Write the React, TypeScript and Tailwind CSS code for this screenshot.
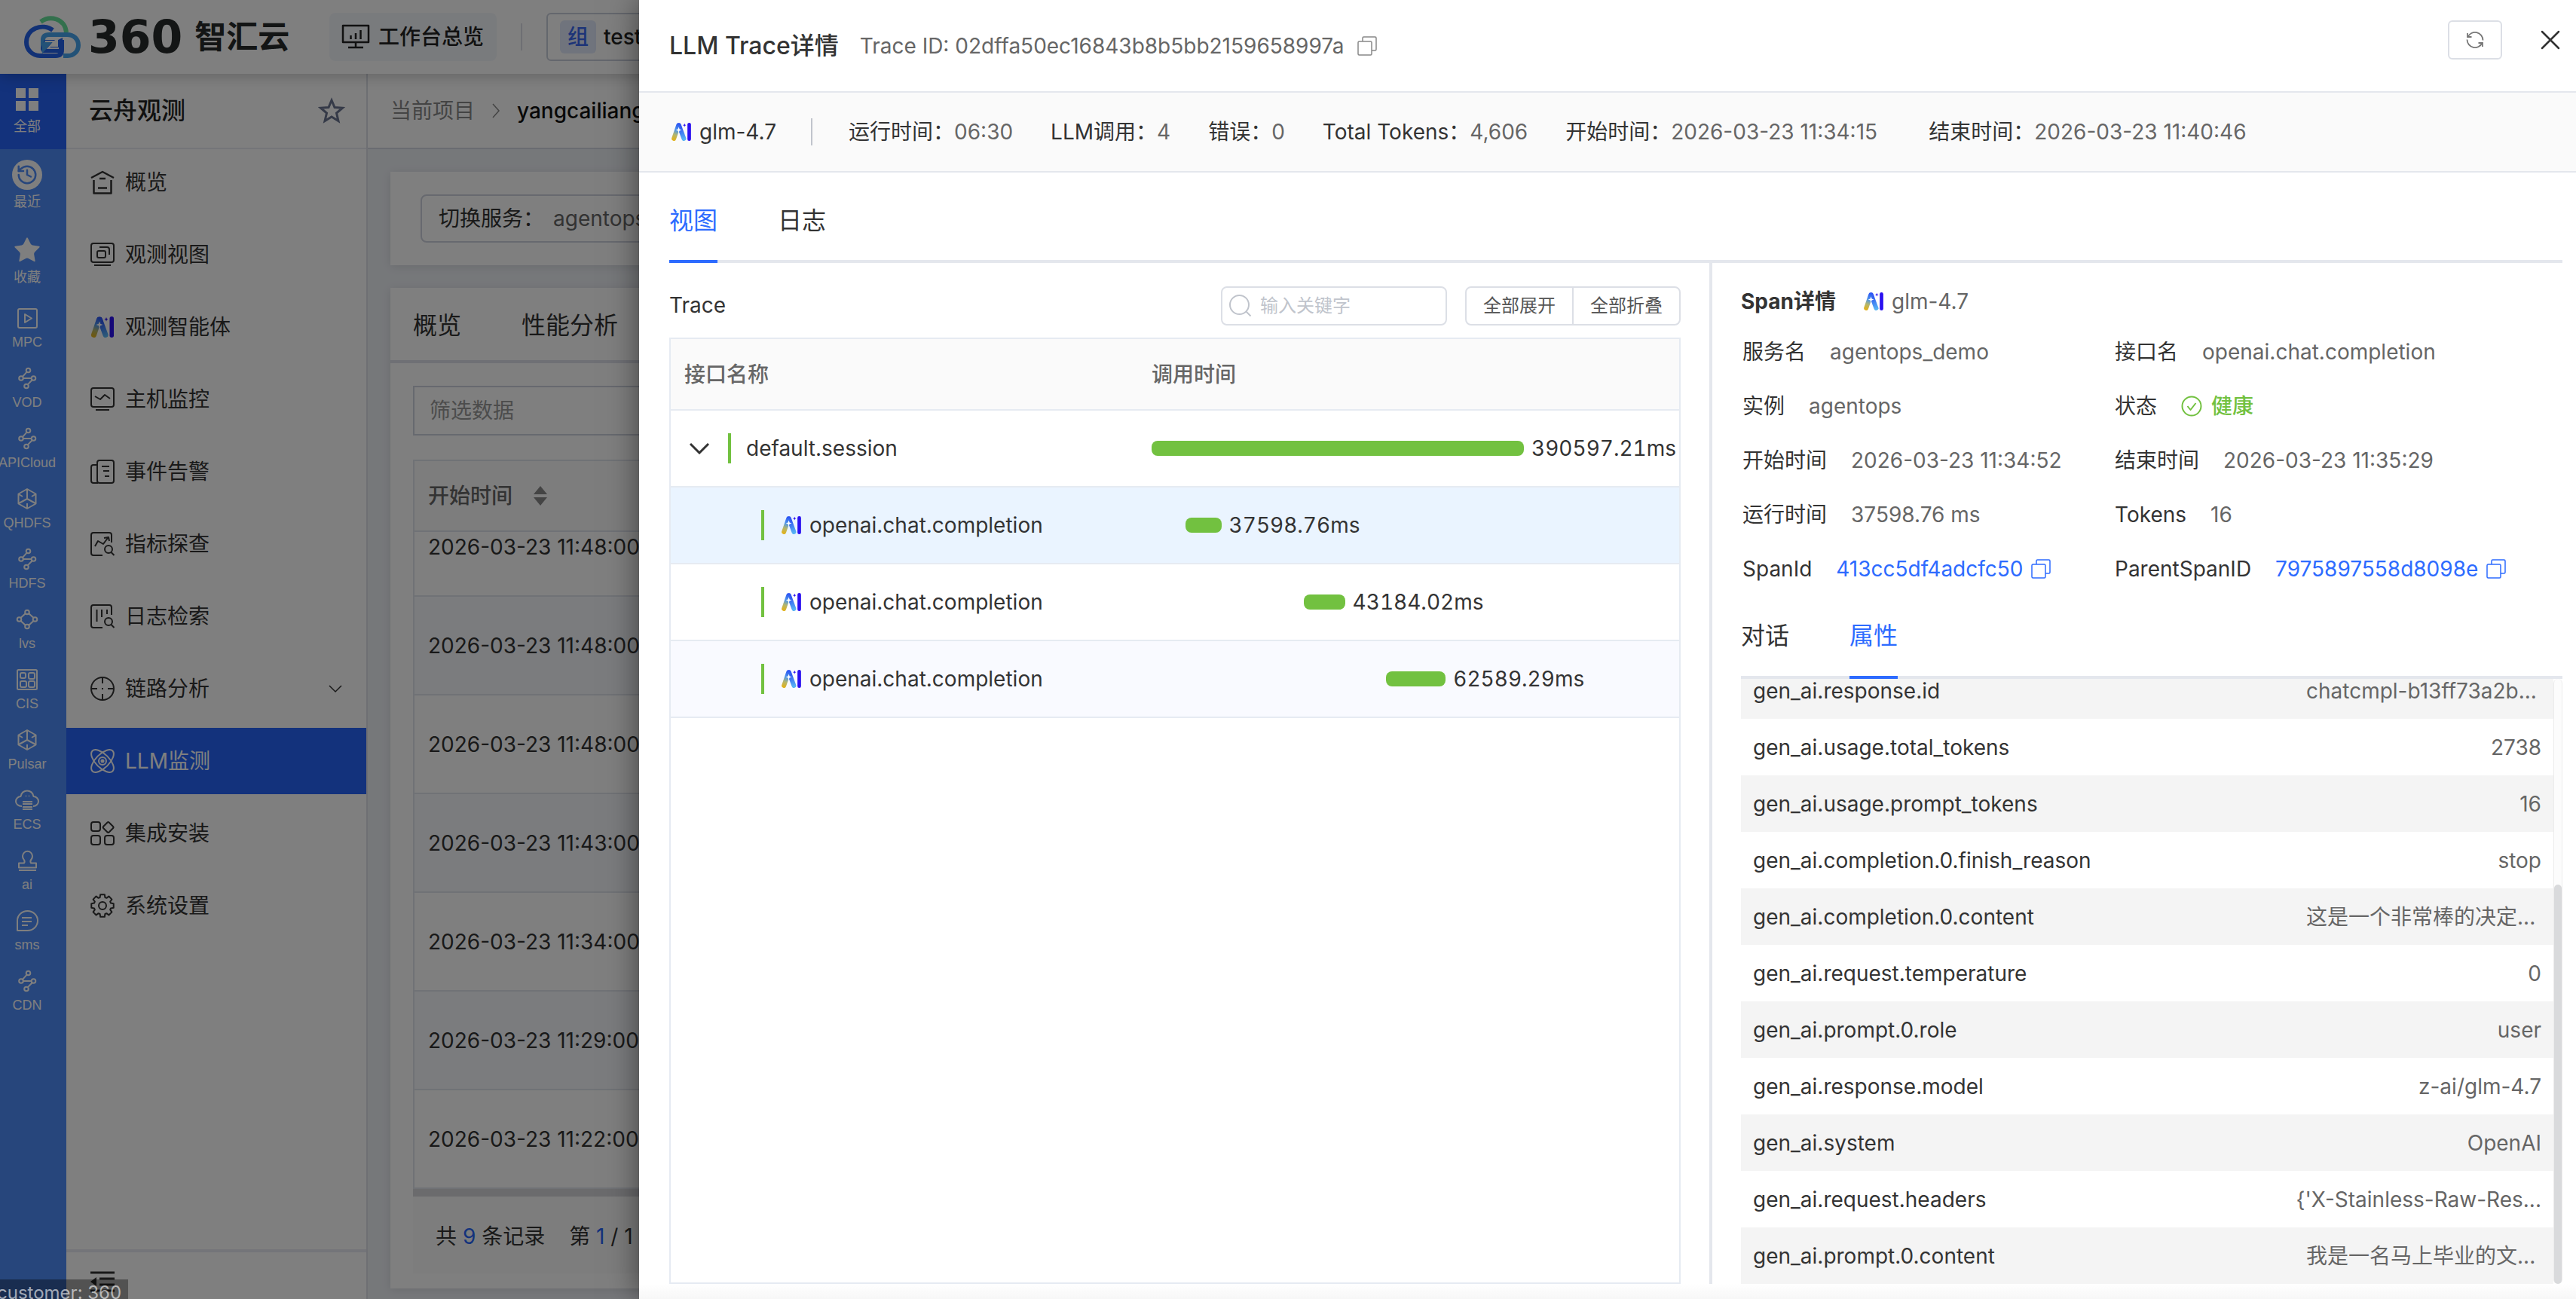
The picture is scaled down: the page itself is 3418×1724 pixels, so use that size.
import type { ReactNode } from 'react';
import clsx from 'clsx';
import { History, Star } from 'lucide-react';

// outline of the eight-tooth gear, 32x32 box
const gearPath = (() => {
  const parts: string[] = [];
  for (let i = 0; i < 8; i++) {
    const mid = (i * Math.PI) / 4 - Math.PI / 2;
    const points: [number, number][] = [
      [11.5, -0.3],
      [15, -0.19],
      [15, 0.19],
      [11.5, 0.3],
    ];
    points.forEach(([r, a]) => {
      const x = (16 + r * Math.cos(mid + a)).toFixed(2);
      const y = (16 + r * Math.sin(mid + a)).toFixed(2);
      parts.push(`${parts.length ? 'L' : 'M'}${x} ${y}`);
    });
  }
  return `${parts.join('')}Z`;
})();

const menuIcons: Record<string, ReactNode> = {
  home: (
    <g strokeWidth="2.500">
      <path d="M1 10 16 2l15 8" />
      <path d="M4.500 13v17.500h23V13M12 11h8M10 23.500h12" />
    </g>
  ),
  view: (
    <>
      <rect x="1" y="1" width="30" height="25" rx="3" />
      <rect x="9" y="11" width="11" height="9" rx="2" />
      <path d="M12 6h10q3 0 3 3v7M5 30h22" />
    </>
  ),
  host: (
    <>
      <rect x="1" y="1" width="30" height="25" rx="3" />
      <path d="m6 12 7 4 6-6 7 5M7 30h18" />
    </>
  ),
  event: (
    <>
      <path d="M9 7H4q-3 0-3 3v18q0 3 3 3h6" />
      <rect x="9" y="1" width="22" height="30" rx="3" />
      <path d="M15 9h10M17 15h8M19 22h6" />
    </>
  ),
  metric: (
    <>
      <path d="M28 14V4q0-3-3-3H4Q1 1 1 4v24q0 3 3 3h12" />
      <path d="m6 19 4-7 7 4 6-8M18 8l6-1 1 5" />
      <circle cx="24" cy="23" r="5" />
      <path d="m27.500 27 4 4" />
    </>
  ),
  log: (
    <>
      <path d="M28 14V4q0-3-3-3H4Q1 1 1 4v24q0 3 3 3h12" />
      <path d="M8.500 7v16M15 7v10M22 7v6" />
      <circle cx="24" cy="23" r="5" />
      <path d="m27.500 27 4 4" />
    </>
  ),
  link: (
    <>
      <circle cx="16" cy="16" r="15" />
      <path d="M16 1v8M16 23v8M1 16h8M23 16h8M15 16h2" />
    </>
  ),
  llm: (
    <>
      <ellipse cx="16" cy="16" rx="19" ry="9" transform="rotate(45 16 16)" />
      <ellipse cx="16" cy="16" rx="19" ry="9" transform="rotate(-45 16 16)" />
      <circle cx="16" cy="16" r="5" />
      <circle cx="16" cy="16" r="1.500" fill="currentColor" />
    </>
  ),
  install: (
    <>
      <rect x="1" y="1" width="12" height="12" rx="3" />
      <rect x="1" y="19" width="12" height="12" rx="3" />
      <rect x="19" y="19" width="12" height="12" rx="3" />
      <path d="m22.300 1.700-5 5q-1.300 1.300 0 2.600l5 5q1.300 1.300 2.600 0l5-5q1.300-1.300 0-2.600l-5-5q-1.300-1.300-2.600 0Z" />
    </>
  ),
  setting: (
    <>
      <path d={gearPath} />
      <circle cx="16" cy="16" r="5" />
    </>
  ),
};

const nodesIcon = (
  <>
    <circle cx="15.500" cy="3.500" r="2.800" />
    <circle cx="6" cy="14" r="2.800" />
    <circle cx="22.500" cy="14" r="2.800" />
    <circle cx="13" cy="24.500" r="2.800" />
    <path d="m13.600 5.700-5.600 6.200M9 14h10.700M20.700 16.200l-6 6.200" />
  </>
);

const cubeIcon = (
  <>
    <path d="m14 1 11.500 6.500v13L14 27 2.500 20.500v-13Z" />
    <path d="M14 2v12M14 14 3 20M14 14l11 6M3 8l5 3M25 8l-5 3M14 26v-6" />
  </>
);

const stripItems: { label: string; icon: ReactNode }[] = [
  {
    label: 'MPC',
    icon: (
      <>
        <rect x="2" y="2" width="25" height="25" rx="2" />
        <path d="M11 9v11l9-5.500Z" />
      </>
    ),
  },
  { label: 'VOD', icon: nodesIcon },
  { label: 'APICloud', icon: nodesIcon },
  { label: 'QHDFS', icon: cubeIcon },
  { label: 'HDFS', icon: nodesIcon },
  {
    label: 'lvs',
    icon: (
      <>
        <circle cx="14" cy="4.500" r="2.800" />
        <circle cx="3.500" cy="14" r="2.800" />
        <circle cx="24.500" cy="14" r="2.800" />
        <circle cx="14" cy="23.500" r="2.800" />
        <path d="m11.700 6.300-6 5.500M16.300 6.300l6 5.500M5.700 16.200l6 5.500M22.300 16.200l-6 5.500" />
      </>
    ),
  },
  {
    label: 'CIS',
    icon: (
      <>
        <rect x="1" y="1" width="26" height="26" rx="1.500" />
        <rect x="5" y="5" width="7" height="7" rx="2" />
        <rect x="16" y="5" width="8" height="8" rx="2" />
        <rect x="5" y="16" width="8" height="8" rx="2" />
        <rect x="16" y="16" width="8" height="8" rx="2" />
      </>
    ),
  },
  { label: 'Pulsar', icon: cubeIcon },
  {
    label: 'ECS',
    icon: (
      <>
        <path d="M7 22C2 22-1 19-1 15.500S2 9 5.500 9C6 4 10 1.500 14 1.500S22 4 22.500 9c3.500 0 6.500 3 6.500 6.500S26 22 22 22" />
        <path d="M8 16h13M8 19h13M8 23h13M8 26h13M12 8.500h1M16 8.500h1" />
      </>
    ),
  },
  {
    label: 'ai',
    icon: (
      <path d="M3 27h23M3 17.500h7q1.500-2.500-.5-5a6.500 6.500 0 1 1 10 0q-2 2.500-.5 5h7v6H3Z" />
    ),
  },
  {
    label: 'sms',
    icon: (
      <>
        <path d="M1 27V14A13.500 13 0 1 1 14.500 27Z" />
        <path d="M7 10h13M7 15h13M7 20h8" />
      </>
    ),
  },
  { label: 'CDN', icon: nodesIcon },
];

const menuItems = [
  { label: '概览', icon: 'home' },
  { label: '观测视图', icon: 'view' },
  { label: '观测智能体', icon: 'ai' },
  { label: '主机监控', icon: 'host' },
  { label: '事件告警', icon: 'event' },
  { label: '指标探查', icon: 'metric' },
  { label: '日志检索', icon: 'log' },
  { label: '链路分析', icon: 'link', expandable: true },
  { label: 'LLM监测', icon: 'llm', active: true },
  { label: '集成安装', icon: 'install' },
  { label: '系统设置', icon: 'setting' },
];

const records = [
  '2026-03-23 11:48:00',
  '2026-03-23 11:48:00',
  '2026-03-23 11:48:00',
  '2026-03-23 11:43:00',
  '2026-03-23 11:34:00',
  '2026-03-23 11:29:00',
  '2026-03-23 11:22:00',
];

const summary = [
  { label: '运行时间：', value: '06:30' },
  { label: 'LLM调用：', value: '4' },
  { label: '错误：', value: '0' },
  { label: 'Total Tokens：', value: '4,606' },
  { label: '开始时间：', value: '2026-03-23 11:34:15', date: true },
  { label: '结束时间：', value: '2026-03-23 11:40:46', date: true },
];

const TOTAL_MS = 390597.21;

const spans = [
  { name: 'default.session', offset: 0, ms: 390597.21, root: true },
  { name: 'openai.chat.completion', offset: 35600, ms: 37598.76, selected: true },
  { name: 'openai.chat.completion', offset: 159700, ms: 43184.02 },
  { name: 'openai.chat.completion', offset: 246000, ms: 62589.29, striped: true },
];

const attributes = [
  { name: 'gen_ai.response.id', value: 'chatcmpl-b13ff73a2b...' },
  { name: 'gen_ai.usage.total_tokens', value: '2738' },
  { name: 'gen_ai.usage.prompt_tokens', value: '16' },
  { name: 'gen_ai.completion.0.finish_reason', value: 'stop' },
  { name: 'gen_ai.completion.0.content', value: '这是一个非常棒的决定...' },
  { name: 'gen_ai.request.temperature', value: '0' },
  { name: 'gen_ai.prompt.0.role', value: 'user' },
  { name: 'gen_ai.response.model', value: 'z-ai/glm-4.7' },
  { name: 'gen_ai.system', value: 'OpenAI' },
  { name: 'gen_ai.request.headers', value: "{'X-Stainless-Raw-Res..." },
  { name: 'gen_ai.prompt.0.content', value: '我是一名马上毕业的文...' },
];

function LineIcon({ className, size, children }: { className?: string; size: number; children: ReactNode }) {
  return (
    <svg
      className={clsx('shrink-0 overflow-visible', className)}
      width={size}
      height={size}
      viewBox={`0 0 ${size} ${size}`}
      fill="none"
      stroke="currentColor"
      strokeWidth="2"
      strokeLinejoin="round"
      aria-hidden="true"
    >
      {children}
    </svg>
  );
}

function AiIcon({ className }: { className?: string }) {
  return (
    <svg className={clsx('shrink-0', className)} viewBox="0 0 31 28" aria-hidden="true">
      <defs>
        <linearGradient id="ai-left" gradientUnits="userSpaceOnUse" x1="3" y1="26" x2="12" y2="2">
          <stop offset="0" stopColor="#e0b21e" />
          <stop offset="0.3" stopColor="#b5b66a" />
          <stop offset="0.6" stopColor="#4f97e8" />
          <stop offset="1" stopColor="#2b55f5" />
        </linearGradient>
        <linearGradient id="ai-right" gradientUnits="userSpaceOnUse" x1="12" y1="2" x2="20" y2="26">
          <stop offset="0" stopColor="#2440f0" />
          <stop offset="1" stopColor="#58b4f4" />
        </linearGradient>
      </defs>
      <path d="m12 4 7.500 20.500" stroke="url(#ai-right)" strokeWidth="7" strokeLinecap="round" />
      <path d="M4 24.500 11 4" stroke="url(#ai-left)" strokeWidth="7" strokeLinecap="round" />
      <path d="m11.500 6.500 1.200 3.300L16 11l-3.300 1.200-1.200 3.300-1.200-3.300L7 11l3.300-1.200Z" fill="#fff" />
      <path d="m20.500 1 .8 1.900 1.900.8-1.900.8-.8 1.900-.8-1.900-1.900-.8 1.900-.8Z" fill="#2a10f0" />
      <rect x="25" y="0" width="5.500" height="28" rx="2.700" fill="#2a10f0" />
    </svg>
  );
}

function BrandLogo() {
  return (
    <svg className="h-14 w-[75px] shrink-0" viewBox="0 0 75 56" fill="none" aria-hidden="true">
      <path d="M22 8C34-1 54 3 56 22" stroke="#66e09a" strokeWidth="6" />
      <path d="M38 19C24 9 3 17 3 35c0 10 8 18 18 18h21q8 0 8-8V32" stroke="#2563eb" strokeWidth="6" />
      <path d="M25 46V32q0-7 8-7h24c9 0 15 6 15 14s-6 14-14 14h-6" stroke="#47a5ee" strokeWidth="6" />
      <path d="M27 32h14l-8 9h12V32l6-3v17l-4 3H24l-2-6Z" fill="#2563eb" />
      <path d="M28 33h11L24 50V37Z" fill="#47a5ee" />
      <path d="M28 34h12l-8 9h14" stroke="#fff" strokeWidth="2" />
    </svg>
  );
}

function CopyIcon({ className }: { className?: string }) {
  return (
    <LineIcon size={28} className={className}>
      <g strokeWidth="1.500">
        <rect x="2" y="8" width="18" height="18" rx="1.500" />
        <path d="M8 8V3.500Q8 2 9.500 2h15Q26 2 26 3.500v15q0 1.500-1.500 1.500H20" />
      </g>
    </LineIcon>
  );
}

function TopBar() {
  return (
    <header className="relative z-10 flex h-[98px] shrink-0 items-center bg-white pl-8 shadow-[0_2px_20px_rgba(0,0,0,0.25)]">
      <BrandLogo />
      <span className="ml-2.5 flex w-[308px] items-center whitespace-nowrap text-[#262a2a]">
        <span className="font-['DejaVu_Sans',sans-serif] text-[60px] leading-none font-bold">360</span>
        <span className="ml-4 text-[42px] leading-none font-bold">智汇云</span>
      </span>
      <button type="button" className="ml-3 flex h-16 items-center gap-3 rounded-lg bg-[#f3f6fb] px-[17px] text-[28px] font-medium text-[#222]">
        <LineIcon size={36} className="text-[#222]">
          <rect x="1" y="3" width="34" height="22" strokeWidth="2.500" />
          <path d="M18 25v7M8 32h20M11.500 16v5M18 13v8M24.500 9v12" strokeWidth="2.500" />
        </LineIcon>
        工作台总览
      </button>
      <span className="ml-8 h-9 w-0.5 bg-[#dcdfe6]" />
      <button type="button" className="ml-8 flex h-16 w-[360px] items-center gap-2.5 rounded-md border-2 border-[#c9cedb] px-4 text-[28px] font-medium text-[#222]">
        <span className="rounded-md bg-[#e0e9fa] px-2.5 leading-[44px] text-[#3a69f0]">组</span>
        test
      </button>
    </header>
  );
}

function ProductStrip() {
  const big = [
    {
      label: '全部',
      active: true,
      icon: (
        <span className="grid size-[30px] grid-cols-2 gap-1">
          <i className="bg-white" />
          <i className="bg-white" />
          <i className="bg-white" />
          <i className="bg-white" />
        </span>
      ),
    },
    {
      label: '最近',
      icon: (
        <span className="flex size-10 items-center justify-center rounded-full bg-white text-[#4e8cf8]">
          <History size={30} strokeWidth={2} />
        </span>
      ),
    },
    { label: '收藏', icon: <Star size={42} strokeWidth={0} fill="#fff" /> },
  ];

  return (
    <nav className="w-[88px] shrink-0 overflow-hidden bg-[#4e8cf8] text-[18px] text-white" aria-label="产品">
      {big.map((item) => (
        <a
          key={item.label}
          href="#"
          className={clsx('flex h-[100px] flex-col items-center pt-3.5 pr-4', item.active && 'bg-[#2664f8]')}
        >
          <span className="flex size-10 items-center justify-center">{item.icon}</span>
          <span className="mt-1 leading-6">{item.label}</span>
        </a>
      ))}
      {stripItems.map((item) => (
        <a key={item.label} href="#" className="flex h-20 flex-col items-center pt-2.5 pr-4">
          <LineIcon size={28}>{item.icon}</LineIcon>
          <span className="mt-1.5 font-['Liberation_Sans',sans-serif] leading-6">{item.label}</span>
        </a>
      ))}
    </nav>
  );
}

function SideMenu() {
  return (
    <aside className="flex w-[400px] shrink-0 flex-col border-r-2 border-[#dcdfe6] bg-white text-[28px] text-[#333]">
      <div className="flex h-[100px] shrink-0 items-center justify-between border-b-2 border-[#e9ebf2] pr-7 pl-[30px]">
        <h2 className="text-[32px] font-medium text-[#222]">云舟观测</h2>
        <svg className="size-9" viewBox="0 0 36 36" fill="none" stroke="#6b7591" strokeWidth="3" aria-hidden="true">
          <path d="m18 4 4 9.500 10.500.7-8 6.800 2.500 10.500L18 26l-9 5.500L11.500 21l-8-6.800 10.500-.7Z" />
        </svg>
      </div>
      <nav className="flex flex-1 flex-col gap-2">
        {menuItems.map((item) => (
          <a
            key={item.label}
            href="#"
            aria-current={item.active ? 'page' : undefined}
            className={clsx('flex h-[88px] items-center gap-3.5 px-8', item.active && 'bg-[#2664f8] text-white')}
          >
            {item.icon === 'ai' ? <AiIcon className="h-7 w-8" /> : <LineIcon size={32}>{menuIcons[item.icon]}</LineIcon>}
            {item.label}
            {item.expandable ? (
              <svg className="ml-auto h-3 w-[18px]" viewBox="0 0 18 12" fill="none" stroke="currentColor" strokeWidth="1.500" aria-hidden="true">
                <path d="m1 2 8 8 8-8" />
              </svg>
            ) : null}
          </a>
        ))}
      </nav>
      <div className="h-[66px] shrink-0 border-t-4 border-[#e9ebf2] px-8 pt-[22px]">
        <button type="button" aria-label="收起菜单">
          <svg className="h-7 w-8" viewBox="0 0 32 28" fill="none" stroke="currentColor" strokeWidth="3" aria-hidden="true">
            <path d="M0 2h32M12 10h20M12 18h20M0 26h32" />
            <path d="M0 14 8 8v12Z" fill="currentColor" stroke="none" />
          </svg>
        </button>
      </div>
    </aside>
  );
}

function ServicePage() {
  return (
    <main className="flex min-w-0 flex-1 flex-col bg-[#edf0f5] text-[28px]">
      <div className="flex h-[100px] shrink-0 items-center border-b-2 border-[#d5d9e2] bg-white pl-[30px]">
        <span className="text-[#888]">当前项目</span>
        <svg className="mx-[22px] h-[26px] w-3" viewBox="0 0 12 26" fill="none" stroke="#888" strokeWidth="1.500" aria-hidden="true">
          <path d="m2 4 8 9-8 9" />
        </svg>
        <span className="font-medium text-[#111]">yangcailiang</span>
      </div>

      <div className="flex min-h-0 flex-1 flex-col gap-[30px] px-[30px] pt-[30px] pb-3.5">
        <section className="shrink-0 bg-white px-10 py-[30px] shadow-[0_2px_12px_rgba(0,0,0,0.1)]">
          <button type="button" className="flex h-16 w-[600px] items-center gap-3 rounded-lg border-2 border-[#cfd3de] px-[22px] text-[#333]">
            切换服务：<span className="text-[#666]">agentops</span>
          </button>
        </section>

        <section className="flex min-h-0 flex-1 flex-col bg-white pb-5 shadow-[0_2px_12px_rgba(0,0,0,0.1)]">
          <div className="flex h-[100px] shrink-0 items-center gap-20 border-b-4 border-[#dfe1ea] px-[30px] pt-1 text-[32px] text-[#333]">
            <button type="button">概览</button>
            <button type="button">性能分析</button>
          </div>
          <div className="flex min-h-0 flex-1 flex-col px-[30px] pt-[30px]">
            <input
              aria-label="筛选数据"
              placeholder="筛选数据"
              className="h-[66px] w-full shrink-0 border-2 border-[#cfd3de] px-5 placeholder:text-[#999]"
            />
            <div className="mt-8 flex h-24 shrink-0 items-center gap-7 border-2 border-[#e1e4ec] bg-[#fafafb] px-[18px] font-medium text-[#666]">
              开始时间
              <svg className="h-[26px] w-[18px]" viewBox="0 0 18 26" fill="#888" aria-hidden="true">
                <path d="m9 0 9 11H0ZM9 26l9-11H0Z" />
              </svg>
            </div>
            <div className="flex min-h-0 flex-1 flex-col justify-end overflow-hidden border-l-2 border-[#e1e4ec]">
              {records.map((time, index) => (
                <div
                  key={index}
                  className={clsx(
                    'flex h-[131px] shrink-0 items-center border-b-2 border-[#e1e4ec] px-[18px] text-[#333]',
                    index % 2 === 1 && 'bg-[#f6f8fd]',
                  )}
                >
                  {time}
                </div>
              ))}
            </div>
            <div className="h-2.5 shrink-0 bg-[#d6d7da]" />
            <div className="flex h-[102px] shrink-0 items-center gap-8 bg-[#fbfbfb] px-[30px] pt-1 text-[#333]">
              <span>
                共 <b className="font-normal text-[#2664f8]">9</b> 条记录
              </span>
              <span>
                第 <b className="font-normal text-[#2664f8]">1</b> / 1
              </span>
            </div>
          </div>
        </section>
      </div>
    </main>
  );
}

function DrawerHeader() {
  return (
    <div className="flex h-[123px] shrink-0 items-center border-b-2 border-[#e4e7ed] pr-[18px] pl-10">
      <h1 className="text-[32px] font-medium">LLM Trace详情</h1>
      <span className="ml-7 text-[#666]">Trace ID: 02dffa50ec16843b8b5bb2159658997a</span>
      <button type="button" aria-label="复制 Trace ID" className="ml-4 text-[#888]">
        <CopyIcon />
      </button>
      <div className="mb-4 ml-auto flex items-center gap-12">
        <button type="button" aria-label="刷新" className="flex h-[52px] w-[72px] items-center justify-center rounded-md border-2 border-[#dcdfe6] text-[#777]">
          <svg className="size-6" viewBox="0 0 24 24" fill="none" stroke="currentColor" strokeWidth="1.800" aria-hidden="true">
            <path d="M2 3v5h5.500M22 21v-5h-5.500" />
            <path d="M2.500 8A10.500 10.500 0 0 1 22.500 12.500M21.500 16A10.500 10.500 0 0 1 1.500 11.500" />
          </svg>
        </button>
        <button type="button" aria-label="关闭">
          <svg className="size-8" viewBox="0 0 32 32" fill="none" stroke="currentColor" strokeWidth="2.500" strokeLinecap="round" aria-hidden="true">
            <path d="m5 5 22 22M27 5 5 27" />
          </svg>
        </button>
      </div>
    </div>
  );
}

function SummaryBar() {
  return (
    <div className="flex h-[106px] shrink-0 items-center border-b-2 border-[#e4e7ed] bg-[#fafafa] px-[42px] whitespace-nowrap">
      <AiIcon className="h-6 w-7" />
      <span className="ml-2.5">glm-4.7</span>
      <span className="mr-12 ml-[46px] h-9 w-0.5 bg-[#c0c4cc]" />
      <dl className="flex gap-[50px]">
        {summary.map((item) => (
          <div key={item.label} className="flex">
            <dt>{item.label}</dt>
            <dd className={clsx('text-[#666]', item.date && 'min-w-[292px]')}>{item.value}</dd>
          </div>
        ))}
      </dl>
    </div>
  );
}

function Tabs({ items, active, className }: { items: string[]; active: string; className: string }) {
  return (
    <div role="tablist" className={clsx('flex shrink-0 gap-20 border-b-4 border-[#e4e7ed] text-[32px]', className)}>
      {items.map((item) => (
        <button
          key={item}
          type="button"
          role="tab"
          aria-selected={item === active}
          className={clsx('-mb-1 border-b-4', item === active ? 'border-[#2d6bff] text-[#2d6bff]' : 'border-transparent')}
        >
          {item}
        </button>
      ))}
    </div>
  );
}

function TracePanel() {
  return (
    <section className="flex min-w-0 flex-1 flex-col pt-[31px] pr-[38px]">
      <div className="flex h-[52px] shrink-0 items-center text-2xl">
        <h2 className="mr-auto text-[28px]">Trace</h2>
        <label className="flex h-[52px] w-[300px] items-center gap-2.5 rounded-lg border-2 border-[#dcdfe6] px-2">
          <svg className="size-8 shrink-0" viewBox="0 0 32 32" fill="none" stroke="#c0c4cc" strokeWidth="2" aria-hidden="true">
            <circle cx="14.500" cy="14.500" r="12.500" />
            <path d="m23.500 23.500 6 6" />
          </svg>
          <input aria-label="输入关键字" placeholder="输入关键字" className="w-full min-w-0 outline-none placeholder:text-[#c0c4cc]" />
        </label>
        <div className="ml-6 flex h-[52px] divide-x-2 divide-[#dcdfe6] rounded-lg border-2 border-[#dcdfe6] text-[#555]">
          <button type="button" className="px-[22px]">全部展开</button>
          <button type="button" className="px-[22px]">全部折叠</button>
        </div>
      </div>

      <div className="mt-4 min-h-0 flex-1 border-2 border-[#e6ebf2]">
        <table className="w-full table-fixed border-collapse text-left">
          <colgroup>
            <col className="w-[618px]" />
            <col />
          </colgroup>
          <thead>
            <tr className="h-[94px] border-b-2 border-[#e6ebf2] bg-[#fafafa] text-[#666]">
              <th className="px-[18px] font-medium">接口名称</th>
              <th className="px-5 font-medium">调用时间</th>
            </tr>
          </thead>
          <tbody>
            {spans.map((span, index) => (
              <tr
                key={index}
                className={clsx(
                  'h-[102px] border-b-2 border-[#e6ebf2]',
                  span.selected && 'bg-[#eaf4ff]',
                  span.striped && 'bg-[#f9faff]',
                )}
              >
                <td className="px-[18px]">
                  <div className={clsx('flex items-center', span.root ? 'pl-1.5' : 'pl-[102px]')}>
                    {span.root ? (
                      <button type="button" aria-label="折叠" className="mr-6">
                        <svg className="h-4 w-7" viewBox="0 0 28 16" fill="none" stroke="currentColor" strokeWidth="3" aria-hidden="true">
                          <path d="m2 2 12 12L26 2" />
                        </svg>
                      </button>
                    ) : null}
                    <span className="mr-5 h-10 w-1 bg-[#72c140]" />
                    {span.root ? null : <AiIcon className="mr-2.5 ml-0.5 h-6 w-7" />}
                    {span.name}
                  </div>
                </td>
                <td className="px-5">
                  <div className="pr-[186px]">
                    <div className="flex items-center">
                      <span
                        className="h-5 shrink-0 rounded-lg bg-[#72c140]"
                        style={{
                          marginLeft: `${(span.offset / TOTAL_MS) * 100}%`,
                          width: `${(span.ms / TOTAL_MS) * 100}%`,
                        }}
                      />
                      <span className="ml-2.5 whitespace-nowrap tabular-nums">{span.ms.toFixed(2)}ms</span>
                    </div>
                  </div>
                </td>
              </tr>
            ))}
          </tbody>
        </table>
      </div>
    </section>
  );
}

function Field({ label, children }: { label: string; children: ReactNode }) {
  return (
    <div className="flex h-[72px] items-center gap-8 whitespace-nowrap">
      <dt>{label}</dt>
      <dd className="flex items-center text-[#666]">{children}</dd>
    </div>
  );
}

function SpanLink({ id }: { id: string }) {
  return (
    <span className="flex items-center gap-2.5 text-[#2d6bff]">
      <a href="#">{id}</a>
      <button type="button" aria-label="复制">
        <CopyIcon />
      </button>
    </span>
  );
}

function SpanPanel() {
  return (
    <section className="flex w-[1132px] shrink-0 flex-col border-l-4 border-[#e4e7ed] pt-[30px] pl-[38px]">
      <div className="flex h-[42px] shrink-0 items-center">
        <h2 className="mr-9 font-bold">Span详情</h2>
        <AiIcon className="mr-2.5 h-6 w-7" />
        <span className="text-[#666]">glm-4.7</span>
      </div>
      <dl className="mt-2.5 grid shrink-0 grid-cols-[494px_1fr] pl-0.5">
        <Field label="服务名">agentops_demo</Field>
        <Field label="接口名">openai.chat.completion</Field>
        <Field label="实例">agentops</Field>
        <Field label="状态">
          <span className="flex items-center gap-3 font-medium text-[#72c140]">
            <LineIcon size={28}>
              <circle cx="14" cy="14" r="12.500" />
              <path d="m8.500 14 4 5 7-9" />
            </LineIcon>
            健康
          </span>
        </Field>
        <Field label="开始时间">2026-03-23 11:34:52</Field>
        <Field label="结束时间">2026-03-23 11:35:29</Field>
        <Field label="运行时间">37598.76 ms</Field>
        <Field label="Tokens">16</Field>
        <Field label="SpanId">
          <SpanLink id="413cc5df4adcfc50" />
        </Field>
        <Field label="ParentSpanID">
          <SpanLink id="7975897558d8098e" />
        </Field>
      </dl>
      <Tabs items={['对话', '属性']} active="属性" className="h-[110px]" />
      <div className="flex min-h-0 flex-1">
        <dl className="flex min-w-0 flex-1 flex-col justify-end overflow-hidden">
          {attributes.map((item, index) => (
            <div
              key={item.name}
              className={clsx('flex h-[75px] shrink-0 items-center justify-between px-4', index % 2 === 0 && 'bg-[#f4f4f4]')}
            >
              <dt>{item.name}</dt>
              <dd className={clsx('text-[#666]', item.value.endsWith('...') && 'min-w-[312px] whitespace-nowrap')}>{item.value}</dd>
            </div>
          ))}
        </dl>
        <div className="flex w-3 shrink-0 flex-col justify-end rounded-full border-x border-[#ececec] bg-[#fcfcfc]">
          <div className="h-[66%] rounded-full bg-[#d9dadc]" />
        </div>
      </div>
    </section>
  );
}

export default function App() {
  return (
    <div className="relative flex h-screen flex-col overflow-hidden bg-white font-[Inter,'Noto_Sans_CJK_SC',sans-serif]">
      <TopBar />
      <div className="flex min-h-0 flex-1">
        <ProductStrip />
        <SideMenu />
        <ServicePage />
      </div>

      <div className="absolute inset-0 z-20 flex bg-black/50 pl-[848px]">
        <div
          role="dialog"
          aria-label="LLM Trace详情"
          className="flex min-w-0 flex-1 flex-col bg-white text-[28px] text-[#333] shadow-[0_0_40px_rgba(0,0,0,0.5)]"
        >
          <DrawerHeader />
          <SummaryBar />
          <div className="flex min-h-0 flex-1 flex-col pr-[18px] pl-10">
            <Tabs items={['视图', '日志']} active="视图" className="h-[120px] pt-3" />
            <div className="flex min-h-0 flex-1">
              <TracePanel />
              <SpanPanel />
            </div>
          </div>
          <div className="h-5 shrink-0 bg-linear-to-b from-white to-[#f7f7f7]" />
        </div>
      </div>

      <div className="absolute bottom-0 left-0 z-30 h-[26px] w-[170px] overflow-hidden bg-black/35 text-2xl leading-9 text-white/60">
        <span className="-ml-1">customer: 360</span>
      </div>
    </div>
  );
}
